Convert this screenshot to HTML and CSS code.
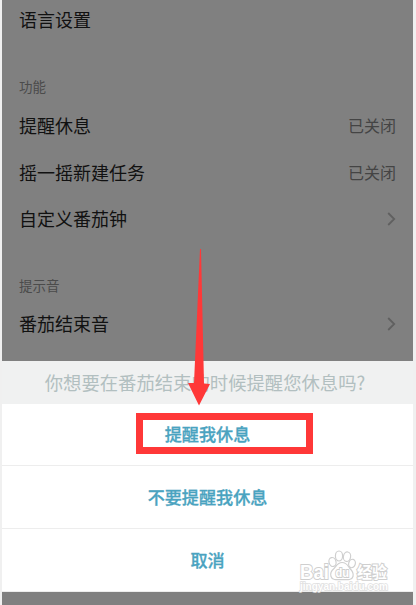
FILE: index.html
```html
<!DOCTYPE html>
<html lang="zh-CN">
<head>
  <meta charset="UTF-8">
  <title>设置</title>
  <link rel="stylesheet" href="styles.css">
</head>
<body>
  <div class="screen">
    <div class="settings">
      <div class="row row-first"><span>语言设置</span></div>

      <div class="group-label">功能</div>
      <div class="row"><span>提醒休息</span><span class="value">已关闭</span></div>
      <div class="row"><span>摇一摇新建任务</span><span class="value">已关闭</span></div>
      <div class="row">
        <span>自定义番茄钟</span>
        <svg class="chevron" viewBox="0 0 9 14"><polyline points="1.2 1 7.2 7 1.2 13"></polyline></svg>
      </div>

      <div class="group-label group-label-sound">提示音</div>
      <div class="row">
        <span>番茄结束音</span>
        <svg class="chevron" viewBox="0 0 9 14"><polyline points="1.2 1 7.2 7 1.2 13"></polyline></svg>
      </div>
    </div>

    <div class="sheet">
      <div class="sheet-title">你想要在番茄结束的时候提醒您休息吗?</div>
      <div class="option option-remind">提醒我休息</div>
      <div class="option">不要提醒我休息</div>
      <div class="option">取消</div>
    </div>
  </div>

  <!-- Annotations -->
  <div class="highlight"></div>
  <svg class="arrow" viewBox="0 0 22 157">
    <polygon points="12 0 13 0 16 134.5 22 135 11 156.5 0 134 6 134"></polygon>
  </svg>

  <!-- Watermark -->
  <svg class="watermark" viewBox="0 0 96 50">
    <ellipse cx="35.5" cy="22" rx="3.5" ry="4.5" transform="rotate(-15 35.5 22)"></ellipse>
    <ellipse cx="42" cy="16" rx="3.6" ry="5"></ellipse>
    <ellipse cx="50" cy="16.7" rx="3.6" ry="4.8" transform="rotate(10 50 16.7)"></ellipse>
    <ellipse cx="55" cy="23.5" rx="3.3" ry="4.3" transform="rotate(15 55 23.5)"></ellipse>
    <path d="M45 22.5C40.5 22.5 39.5 26 37 28.5C34 31 33 33.5 34 36.5C35 40 38.5 40 45 39.5C51.5 40 55 40 56 36.5C57 33 55 30.5 52.5 28C50.5 25 49.5 22.5 45 22.5Z"></path>
    <text class="watermark-name" x="3" y="39" textLength="29" lengthAdjust="spacingAndGlyphs">Bai</text>
    <text class="watermark-du" x="38.5" y="36.5" textLength="13.5" lengthAdjust="spacingAndGlyphs">du</text>
    <text class="watermark-cn" x="60" y="37.5" textLength="30" lengthAdjust="spacingAndGlyphs">经验</text>
    <text class="watermark-url" x="3" y="50" textLength="88" lengthAdjust="spacingAndGlyphs">jingyan.baidu.com</text>
  </svg>
</body>
</html>
```
FILE: styles.css
```css
* {
  margin: 0;
  padding: 0;
  box-sizing: border-box;
}

body {
  height: 605px;
  padding: 0 3px 0 2px;
  background-color: #f0f0f0;
  font-family: "Noto Sans CJK SC", sans-serif;
  overflow: hidden;
}

.screen {
  height: 605px;
  background-color: #808080;
}

.settings {
  height: 361px;
  padding: 0 17px;
}

.row {
  display: flex;
  align-items: center;
  justify-content: space-between;
  height: 46.5px;
  font-size: 18px;
  color: #111;
}

.row span {
  padding-bottom: 2px;
}

.row-first {
  height: 41px;
}

.row-first span {
  padding-bottom: 3px;
}

.value {
  font-size: 16px;
  color: #444;
}

.chevron {
  width: 9px;
  height: 14px;
  fill: none;
  stroke: #606060;
  stroke-width: 1.8;
}

.group-label {
  height: 62px;
  padding-top: 35px;
  font-size: 13.5px;
  line-height: 20px;
  color: #4b4b4b;
}

.group-label-sound {
  height: 58px;
  padding-top: 32px;
}

/* Action sheet */
.sheet {
  height: 231px;
  background-color: #fff;
  text-align: center;
}

.sheet-title {
  height: 43px;
  padding-right: 5px;
  background-color: #f0f1f1;
  font-size: 18.35px;
  line-height: 43px;
  color: #b2bfc0;
  white-space: nowrap;
}

.option {
  height: 63px;
  border-bottom: 1px solid #ededed;
  font-size: 17.1px;
  font-weight: 500;
  line-height: 62px;
  color: #4aa3c0;
  -webkit-text-stroke: 0.3px #4aa3c0;
}

.option-remind {
  height: 62px;
  line-height: 60px;
}

.highlight {
  position: absolute;
  left: 136px;
  top: 413px;
  width: 177px;
  height: 41px;
  border: 7px solid #ff3838;
}

.arrow {
  position: absolute;
  left: 188px;
  top: 249px;
  width: 22px;
  height: 157px;
  fill: #ff3838;
}

.watermark {
  position: absolute;
  left: 297px;
  top: 540px;
  width: 96px;
  height: 50px;
  overflow: visible;
  fill: #fff;
  stroke: #cfcfcf;
  stroke-width: 1.2;
  font-family: "Liberation Sans", "Noto Sans CJK SC", sans-serif;
  font-weight: bold;
}

.watermark text {
  paint-order: stroke;
}

.watermark-name {
  font-size: 21px;
  stroke-width: 2;
}

.watermark-du {
  font-size: 13px;
  stroke-width: 2;
}

.watermark-cn {
  font-size: 15.5px;
  stroke-width: 2;
}

.watermark-url {
  font-size: 10px;
  stroke: #dedede;
  stroke-width: 1.5;
}
```
